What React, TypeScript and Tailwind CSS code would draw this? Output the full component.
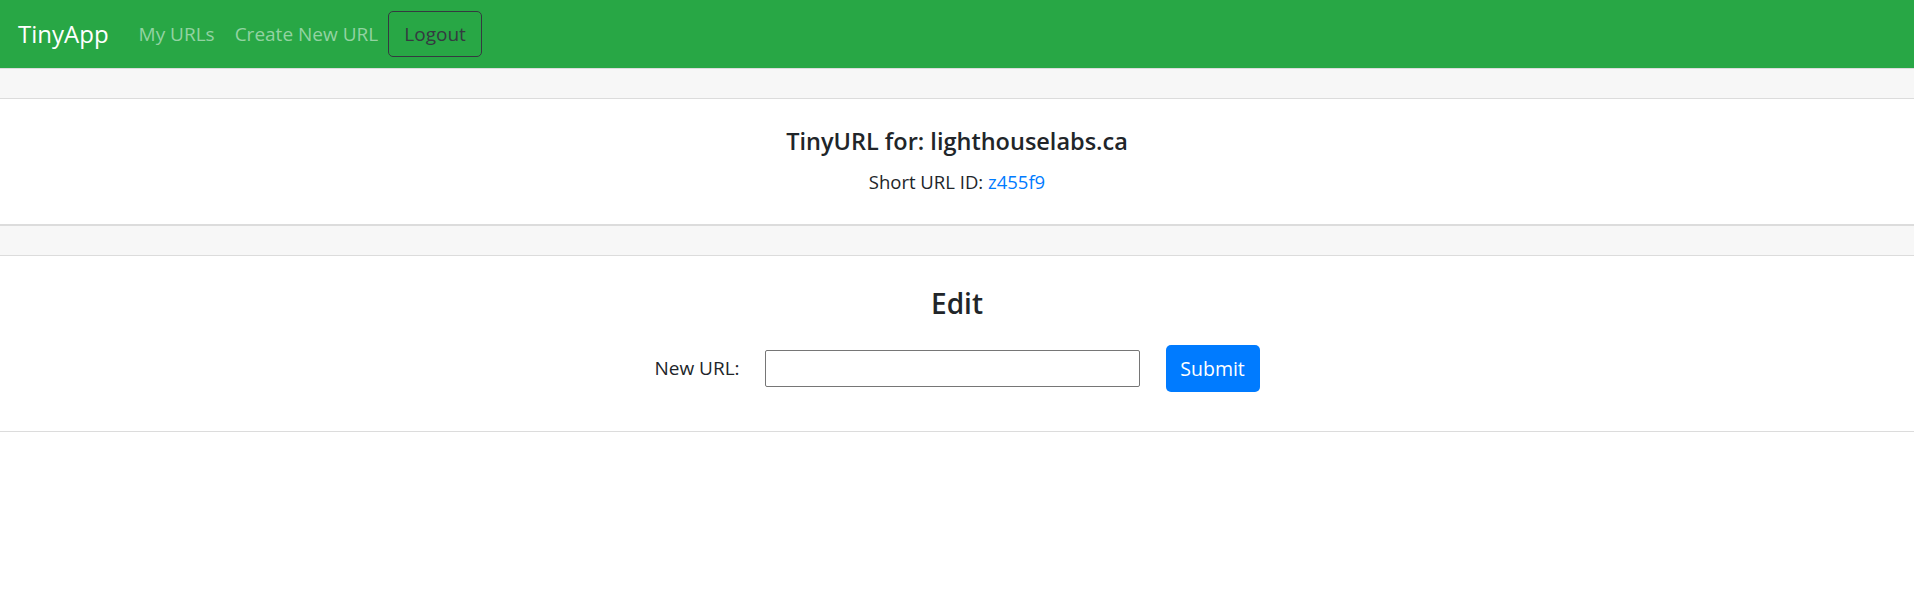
import React from "react"

// ── Navbar ───────────────────────────────────────────────────────────────────

function Navbar() {
  return (
    <nav className="h-[68px] bg-[#28a745] flex items-center pl-[18px]">
      <span className="text-[24px] text-white mr-[30px] leading-none">TinyApp</span>
      <a href="#" className="text-[19px] text-[#93d3a2] mr-[20px]">My URLs</a>
      <a href="#" className="text-[19px] text-[#93d3a2] mr-[10px]">Create New URL</a>
      <button className="h-[46px] w-[94px] rounded-[5px] border border-[#343a40] text-[19px] text-[#343a40]">
        Logout
      </button>
    </nav>
  )
}

// ── Card ─────────────────────────────────────────────────────────────────────

function Card({ bodyH, children }: { bodyH: string; children: React.ReactNode }) {
  return (
    <div className="border-y border-[#dcdcdc]">
      <div className="h-[30px] bg-[#f7f7f7] border-b border-[#dcdcdc]" />
      <div className={`${bodyH} flex flex-col items-center`}>{children}</div>
    </div>
  )
}

export default function App() {
  return (
    <div className="min-h-[597px] bg-white text-[#212529]" style={{ fontFamily: '"Open Sans", "Noto Sans", sans-serif' }}>
      <Navbar />

      <Card bodyH="h-[125px]">
        <h5 className="text-[23.5px] font-semibold mt-[27px] leading-[30px]">TinyURL for: lighthouselabs.ca</h5>
        <p className="text-[18.5px] mt-[14px] leading-[24px]">
          Short URL ID: <a href="#" className="text-[#007bff]">z455f9</a>
        </p>
      </Card>

      <Card bodyH="h-[175px]">
        <h3 className="text-[28px] font-semibold mt-[30px] leading-[34px]">Edit</h3>
        <form className="flex items-center mt-[25px]">
          <label className="text-[19px] mr-[25px]">New URL:</label>
          <input type="text" className="w-[375px] h-[37px] border border-[#767676] rounded-[2px] mr-[26px]" />
          <button type="button" className="w-[94px] h-[47px] rounded-[5px] bg-[#007bff] text-white text-[19.5px]">
            Submit
          </button>
        </form>
      </Card>
    </div>
  )
}
